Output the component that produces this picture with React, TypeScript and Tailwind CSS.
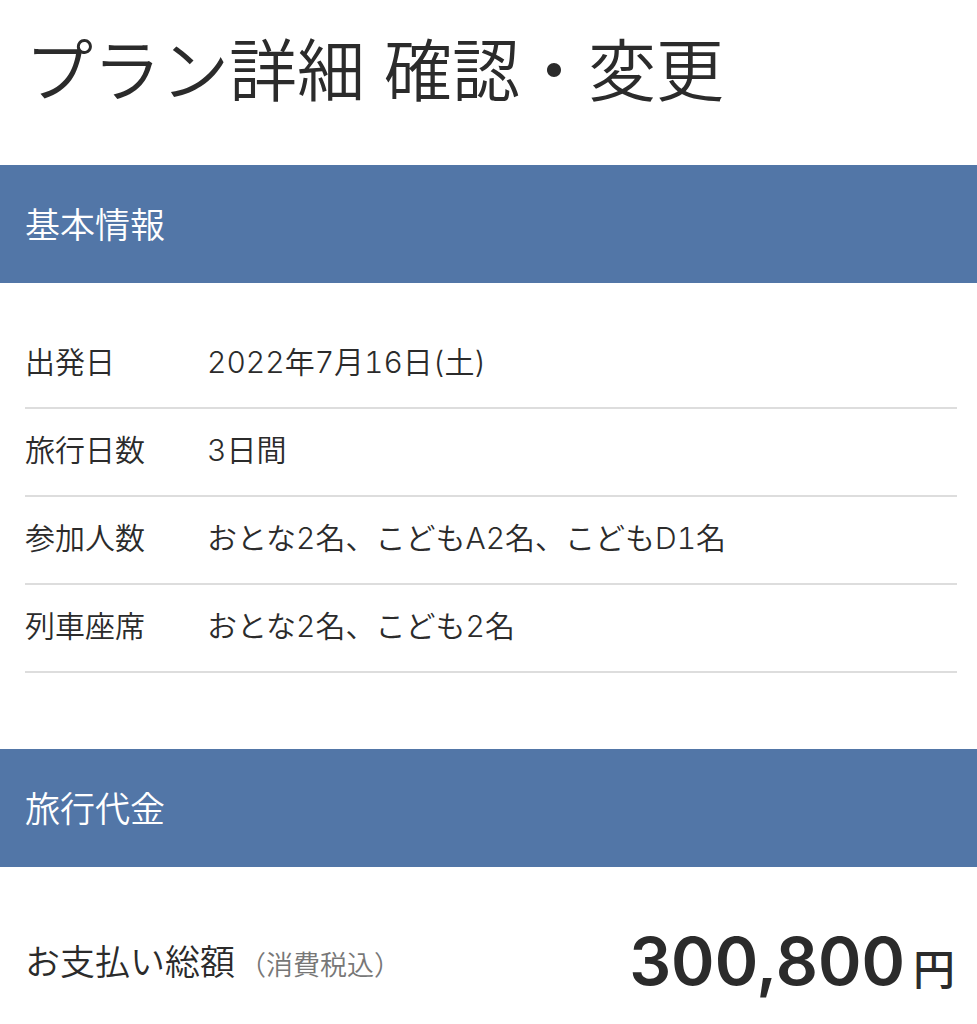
const basicInfo = [
  { label: "出発日", value: "2022年7月16日(土)" },
  { label: "旅行日数", value: "3日間" },
  { label: "参加人数", value: "おとな2名、こどもA2名、こどもD1名" },
  { label: "列車座席", value: "おとな2名、こども2名" },
];

const SectionTitle = ({ title }: { title: string }) => {
  return (
    <h2 className="bg-[#5276a7] px-[25px] pt-[33px] pb-[31px] text-[35px] leading-[54px] font-[350] text-white">
      {title}
    </h2>
  );
};

const App = () => {
  return (
    <main className="min-h-screen bg-white font-['Inter','Noto_Sans_CJK_JP',sans-serif] font-[350] text-[#2b2b2b]">
      <h1 className="px-[25px] pt-6 pb-[45px] text-[68px] leading-[96px] font-[350] font-['Liberation_Sans','Noto_Sans_CJK_JP',sans-serif]">
        プラン詳細 確認・変更
      </h1>

      <SectionTitle title="基本情報" />

      <dl className="pt-[38px] pr-5 pb-[76px] pl-[25px] text-[30px] leading-[46px]">
        {basicInfo.map((item) => (
          <div
            key={item.label}
            className="flex border-b-2 border-[#dddddd] pt-[18px] pb-[22px]"
          >
            <dt className="w-[182px] shrink-0">{item.label}</dt>
            <dd className="tabular-nums">{item.value}</dd>
          </div>
        ))}
      </dl>

      <SectionTitle title="旅行代金" />

      <div className="flex items-center justify-between pt-[50px] pr-[22px] pl-[25px]">
        <p className="pb-1 text-[35px] leading-[54px]">
          お支払い総額
          <span className="ml-1 text-[27px] text-[#777777]">（消費税込）</span>
        </p>
        <p className="text-[66px] leading-[88px] font-semibold">
          300,800
          <span className="ml-2 text-[42px] font-medium">円</span>
        </p>
      </div>
    </main>
  );
};

export default App;
